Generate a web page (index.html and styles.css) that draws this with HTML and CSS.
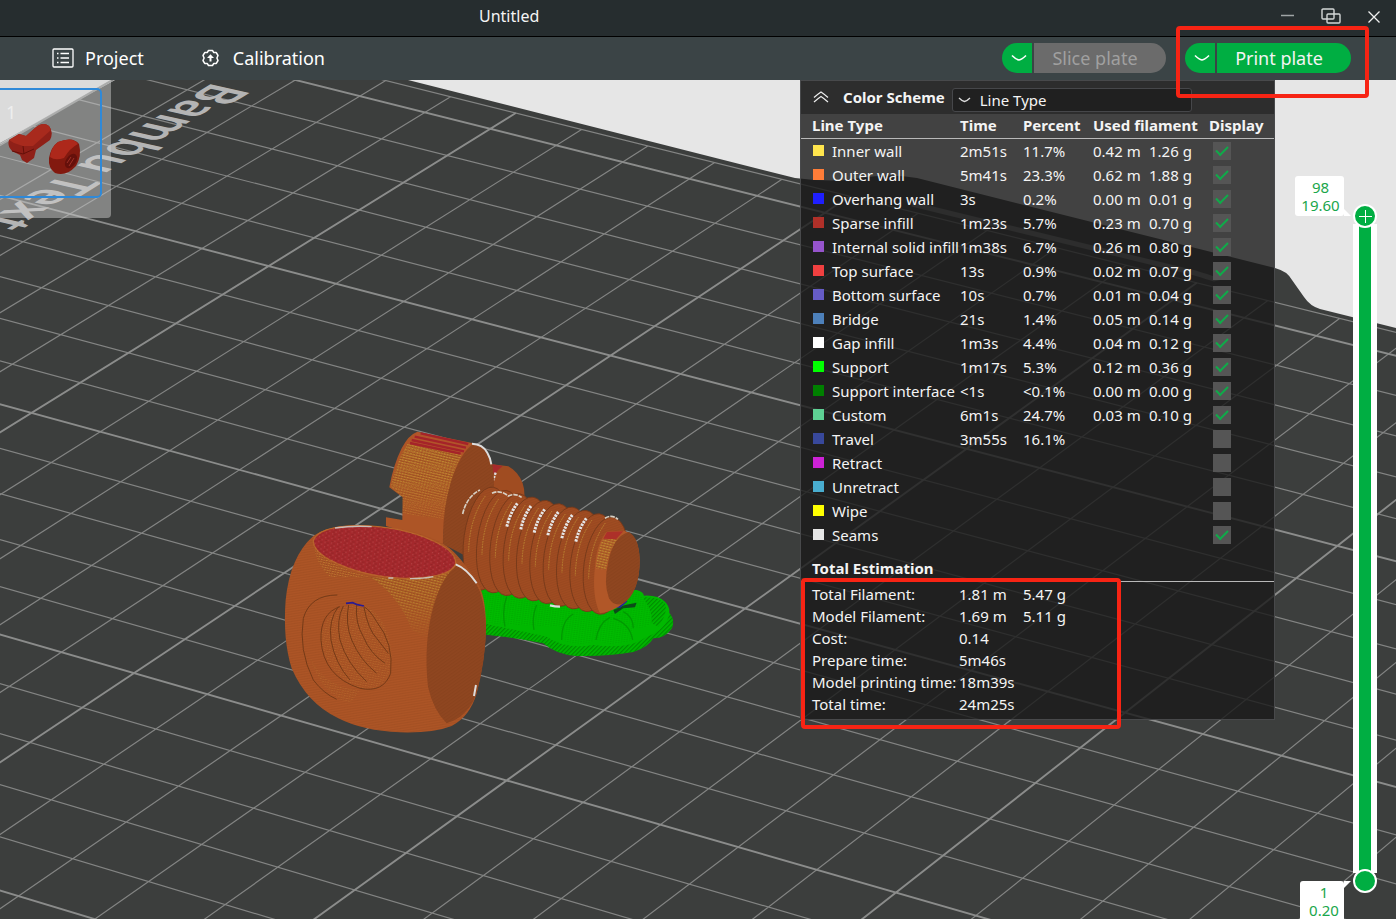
FILE: index.html
```html
<!DOCTYPE html>
<html lang="en">
<head>
<meta charset="utf-8">
<title>Untitled</title>
<link rel="stylesheet" href="styles.css">
</head>
<body>
<header class="titlebar">
  <h1 class="title">Untitled</h1>
  <div class="window-controls">
    <button type="button" aria-label="Minimize"><svg width="20" height="20" viewBox="0 0 20 20"><path d="M3 9.500H16" stroke="#9fa4a5" stroke-width="1.500"/></svg></button>
    <button type="button" aria-label="Restore"><svg width="20" height="20" viewBox="0 0 20 20" fill="none" stroke="#d4d7d7" stroke-width="1.400"><rect x="1" y="3" width="12" height="10" rx="1"/><rect x="6" y="8" width="13" height="9" rx="1"/></svg></button>
    <button type="button" aria-label="Close"><svg width="20" height="20" viewBox="0 0 20 20"><path d="M4.500 5.500L15.500 16.500M15.500 5.500L4.500 16.500" stroke="#f0f0f0" stroke-width="1.300"/></svg></button>
  </div>
</header>
<div class="toolbar">
  <nav class="tabs">
    <a href="#project"><svg width="22" height="20" viewBox="0 0 22 20" fill="none" stroke="#fff" stroke-width="1.300"><rect x="1" y="1" width="20" height="18" rx="1"/><path d="M8.500 5.500H17M8.500 10H17M8.500 14.500H17M5 5.500H6.500M5 10H6.500M5 14.500H6.500"/></svg>Project</a>
    <a href="#calibration"><svg width="17" height="18" viewBox="0 0 17 18" fill="none" stroke="#fff" stroke-width="1.500"><path d="M6.500 1.500H10.500L11.800 3.600H14.300L16 6.500 14.900 9 16 11.500 14.300 14.400H11.800L10.500 16.500H6.500L5.200 14.400H2.700L1 11.500 2.100 9 1 6.500 2.700 3.600H5.200Z" stroke-linejoin="round"/><path d="M8.500 12.500V7.500" stroke-width="2"/><path d="M5 9L8.500 5.200L12 9Z" fill="#fff" stroke="none"/></svg>Calibration</a>
  </nav>
  <div class="actions">
    <div class="split">
      <button class="drop" type="button" aria-label="Slice options"><svg width="16" height="8" viewBox="0 0 16 8"><path d="M1 1.500Q5 5.500 8 6Q11 5.500 15 1.500" fill="none" stroke="#fff" stroke-width="1.600"/></svg></button>
      <button class="main-action" type="button" disabled>Slice plate</button>
    </div>
    <div class="split">
      <button class="drop" type="button" aria-label="Print options"><svg width="16" height="8" viewBox="0 0 16 8"><path d="M1 1.500Q5 5.500 8 6Q11 5.500 15 1.500" fill="none" stroke="#fff" stroke-width="1.600"/></svg></button>
      <button class="main-action" type="button">Print plate</button>
    </div>
    <div class="mark mark-print"></div>
  </div>
</div>
<main class="viewport">
  <svg class="scene" viewBox="0 80 1396 839" preserveAspectRatio="xMinYMin slice" aria-hidden="true">
    <defs>
      <pattern id="layers" width="6" height="5" patternUnits="userSpaceOnUse" patternTransform="rotate(6)"><path d="M0 1H6" stroke="#6d3314" stroke-opacity=".3" stroke-width="1.500"/></pattern>
      <pattern id="dots" width="8" height="7" patternUnits="userSpaceOnUse" patternTransform="rotate(12)"><path d="M0 1.500H5" stroke="#e0b040" stroke-opacity=".6" stroke-width="2"/><path d="M2 5H5" stroke="#6b3212" stroke-opacity=".6" stroke-width="2"/></pattern>
      <pattern id="gold" width="9" height="8" patternUnits="userSpaceOnUse" patternTransform="rotate(14)"><path d="M0 2H7" stroke="#c39a33" stroke-width="3"/><path d="M2 6H8" stroke="#7c4418" stroke-width="1.500"/></pattern>
      <pattern id="redfill" width="19" height="14" patternUnits="userSpaceOnUse" patternTransform="rotate(8)"><path d="M1 2H3M10 9H12" stroke="#cf7a78" stroke-width="1.800"/><path d="M5 3H13M1 10H7" stroke="#82201f" stroke-width="1.500"/></pattern>
      <pattern id="diag" width="8" height="8" patternUnits="userSpaceOnUse" patternTransform="rotate(-35)"><path d="M0 2H8" stroke="#743615" stroke-opacity=".35" stroke-width="2"/></pattern>
      <pattern id="raft" width="9" height="9" patternUnits="userSpaceOnUse" patternTransform="rotate(-45)"><path d="M0 2H9" stroke="#007a00" stroke-width="2.500"/></pattern>
      <pattern id="greenrows" width="8" height="6" patternUnits="userSpaceOnUse" patternTransform="rotate(8)"><path d="M0 2H6" stroke="#008600" stroke-opacity=".6" stroke-width="1.500"/></pattern>
      <linearGradient id="fade" x1="0" y1="0" x2="0" y2="1"><stop offset="0" stop-color="#fff"/><stop offset=".5" stop-color="#bbb"/><stop offset="1" stop-color="#000"/></linearGradient>
      <mask id="fademask" maskContentUnits="objectBoundingBox"><rect width="1" height="1" fill="url(#fade)"/></mask>
      <clipPath id="plateclip"><path d="M104 80H411L800 178L1216 281L1396 328V919H0V145Z"/></clipPath>
    </defs>
    <rect y="80" width="1396" height="839" fill="#e6e6e6"/>
    <path d="M115 80H408L795 178Q835 183 860 178Q890 173 917 178L1275 268Q1287 271 1292 280L1304 297Q1310 306 1320 309L1396 328V919H0V143Z" fill="#3c3e3d"/>
    <path d="M112 80L0 144" stroke="#a9a9a9" stroke-width="1.500"/>
    <g clip-path="url(#plateclip)">
      <path id="grid-minor" fill="none" stroke="#838483" stroke-width="1.200"/>
      <path id="grid-major" fill="none" stroke="#8b8c8b" stroke-width="1.900"/>
    </g>
    <path d="M912 204L1195 273Q1208 277 1214 279L1222 277" fill="none" stroke="#7c7d7c" stroke-width="5"/>
    <text class="plate-name" transform="matrix(-.860 .525 -1.160 -.260 214 82)">Bambu Text</text>

    <g transform="translate(260 410) scale(.3333)">
      <path d="M660 535L1130 540Q1150 545 1152 557Q1195 555 1215 575Q1230 590 1228 608Q1246 630 1236 655Q1215 685 1180 685Q1165 712 1120 726Q1040 740 950 738Q890 735 850 700Q760 682 660 672Z" fill="#00b800"/>
      <path d="M668 640Q740 655 860 680Q920 720 1000 705Q1110 720 1160 680Q1220 660 1228 608Q1246 630 1236 655Q1215 685 1180 685Q1165 712 1120 726Q1040 740 950 738Q890 735 850 700Q760 682 660 672ZM1150 562Q1195 560 1215 580Q1225 610 1195 650L1175 640Z" fill="url(#raft)"/>
      <path d="M665 545L920 585L1000 610L1060 600L1130 545Q1180 590 1175 640Q1150 660 1120 650L1118 690Q1060 715 1010 690Q960 715 905 690Q910 640 890 650L670 640Z" fill="#00bd00"/>
      <path d="M665 545L920 585L1000 610L1060 600L1130 545Q1180 590 1175 640Q1150 660 1120 650L1118 690Q1060 715 1010 690Q960 715 905 690Q910 640 890 650L670 640Z" fill="url(#greenrows)"/>
      <path d="M905 690Q905 630 940 612M1008 690Q1015 640 1050 622M1060 625Q1110 640 1118 690M1090 605Q1120 620 1120 655M740 560Q725 600 735 650M830 585Q815 620 822 660" fill="none" stroke="#009a00" stroke-width="4"/>
      <path d="M1060 600L1095 585L1130 578L1125 592L1090 595L1065 612Z" fill="#0b4b18"/>
      <path d="M1055 590H1080L1100 572" fill="none" stroke="#24229a" stroke-width="6"/>

      <path d="M697 163L745 169Q775 185 788 220Q796 245 792 268L700 250Z" fill="#a04c21"/>
      <path d="M697 163L728 168Q712 180 706 192L698 190Z" fill="#a62a2c"/>
      <path d="M707 188L699 212" stroke="#ddd" stroke-width="7" stroke-dasharray="7 3"/>
      <path d="M472 65L640 100Q600 150 575 230Q550 330 549 402L378 348V322L427 330L428 262L388 232Q400 165 425 115Q445 75 472 65Z" fill="#ad5526"/>
      <path d="M445 98L605 135Q565 210 556 330L428 310V262L392 230Q410 150 445 98Z" fill="url(#gold)" mask="url(#fademask)"/>
      <path d="M445 98L605 135Q565 210 556 330L428 310V262L392 230Q410 150 445 98Z" fill="url(#dots)" opacity=".6"/>
      <path d="M472 67L632 101L606 135L443 101Z" fill="#b2542a"/>
      <path d="M482 70L625 102M464 80L618 113M455 90L612 124M450 99L602 131" stroke="#a52329" stroke-width="7"/>
      <path d="M640 101Q672 104 688 135Q708 190 700 260L640 450L549 402Q547 300 573 215Q600 130 640 101Z" fill="#8f4620"/>
      <path d="M640 101Q672 104 688 135Q708 190 700 260L640 450L549 402Q547 300 573 215Q600 130 640 101Z" fill="url(#diag)"/>
      <path d="M636 101Q668 102 682 128Q692 145 694 163" fill="none" stroke="#ddd" stroke-width="6"/>

      <g id="thread" stroke="#75391a" stroke-width="2.500"></g>
      <path d="M608 312Q620 260 660 240M696 250Q720 238 745 258Q765 248 785 262M1035 325Q1055 312 1074 328" fill="none" stroke="#d7d0c4" stroke-width="5" stroke-dasharray="14 3"/>
      <path d="M772 280Q750 310 740 352M813 288Q791 318 782 360M854 298Q832 328 822 370M895 306Q873 336 863 378M937 315Q915 345 905 387M979 325Q957 355 947 397" fill="none" stroke="#e6e6e6" stroke-width="9" stroke-dasharray="7 3"/>
      <path d="M1040 365L1092 362Q1138 375 1139 450Q1140 540 1090 580Q1060 605 1020 610Q995 560 1005 470Q1010 400 1040 365Z" fill="#b15728"/>
      <path d="M1032 385L1076 388Q1045 420 1038 480L1008 475Q1012 410 1032 385Z" fill="url(#gold)"/>
      <path d="M1041 366L1090 364L1068 388L1030 386Z" fill="#ad3029"/>
      <path d="M1106 366Q1140 382 1139 462Q1136 550 1090 580Q1063 592 1047 565Q1030 520 1045 455Q1060 380 1106 366Z" fill="#8f4620"/>
      <path d="M1106 366Q1140 382 1139 462Q1136 550 1090 580Q1063 592 1047 565Q1030 520 1045 455Q1060 380 1106 366Z" fill="url(#diag)"/>
      <path d="M870 586Q885 590 900 590" stroke="#ddd" stroke-width="7" fill="none"/>

      <path d="M160 378Q210 343 310 346Q480 355 560 408Q600 436 650 516Q677 550 678 650Q677 740 650 850Q630 920 575 948Q520 970 420 967Q310 963 235 925Q140 880 95 775Q68 690 77 570Q90 440 160 378Z" fill="#ad5526"/>
      <path d="M160 378Q210 343 310 346Q480 355 560 408Q600 436 650 516Q677 550 678 650Q677 740 650 850Q630 920 575 948Q520 970 420 967Q310 963 235 925Q140 880 95 775Q68 690 77 570Q90 440 160 378Z" fill="url(#layers)"/>
      <path d="M330 500Q470 520 590 465Q520 530 504 690L455 660Q420 560 330 500Z" fill="url(#gold)" mask="url(#fademask)"/>
      <path d="M160 400Q200 470 330 502Q260 500 210 500Q170 470 160 400Z" fill="url(#dots)"/>
      <path d="M590 467Q640 490 660 545Q678 600 678 660Q675 760 650 850Q625 920 560 940Q520 900 504 830Q490 700 520 590Q545 500 590 467Z" fill="#8f4620"/>
      <path d="M590 467Q640 490 660 545Q678 600 678 660Q675 760 650 850Q625 920 560 940Q520 900 504 830Q490 700 520 590Q545 500 590 467Z" fill="url(#diag)"/>
      <path d="M160 392Q175 350 290 347Q420 347 520 393Q590 425 587 462Q570 505 430 505Q310 500 220 455Q160 425 160 392Z" fill="#a4282c" stroke="#b9652b" stroke-width="4"/>
      <path d="M160 392Q175 350 290 347Q420 347 520 393Q590 425 587 462Q570 505 430 505Q310 500 220 455Q160 425 160 392Z" fill="url(#redfill)"/>
      <path d="M225 354Q280 346 335 350M385 504H400M450 506Q490 506 520 500" stroke="#c9bdb6" stroke-width="4" fill="none"/>
      <path d="M587 463Q620 475 650 520M648 825L642 858" stroke="#ddd" stroke-width="6" fill="none"/>
      <path d="M255 590Q330 560 375 650Q410 740 385 800Q350 850 290 830Q200 790 182 690Q185 620 255 590Z" fill="url(#dots)" opacity=".45"/>
      <path d="M150 740Q190 830 300 840L270 880Q180 850 150 740Z" fill="url(#dots)" opacity=".4"/>
      <path d="M232 555Q150 555 130 625Q115 720 160 810Q190 850 230 868M240 590Q180 610 183 690Q190 800 300 835Q370 850 392 790Q402 700 350 635Q330 600 312 590M235 590Q205 630 213 690Q225 760 270 810M250 588Q228 630 240 690Q260 760 320 815M266 585Q255 640 275 690Q300 750 350 790M290 585Q285 640 310 680Q330 730 375 760M312 592Q325 660 350 685L385 730" fill="none" stroke="#743a17" stroke-width="3"/>
      <path d="M258 580L278 578L292 584L312 588" stroke="#281b93" stroke-width="5" fill="none"/>
    </g>
  </svg>

  <section class="plate-thumb" aria-label="Plate 1">
    <div class="plate-card">
      <span class="plate-number">1</span>
      <svg class="plate-models" width="76" height="60" viewBox="0 4 76 60" aria-hidden="true">
        <path d="M3 22Q1 28 6 33L14 37L16 42L21 45L28 40L30 32L44 22Q48 14 43 8Q37 3 29 10L20 18L13 16Z" fill="#8f2018"/>
        <path d="M3 22L13 16L20 18L29 10Q37 3 43 8L45 12L27 28L17 28L8 25Z" fill="#a82a1d"/>
        <path d="M6 33L17 36L28 31M17 28L18 36" stroke="#641009" fill="none"/>
        <path d="M52 24Q67 18 73 26Q76 38 70 48Q60 59 49 55Q42 50 43 40Q45 29 52 24Z" fill="#82190f"/>
        <path d="M52 24Q67 18 72 26Q64 30 58 40Q49 43 44 39Q45 29 52 24Z" fill="#ad281b"/>
        <ellipse cx="65" cy="43" rx="5" ry="8" transform="rotate(35 65 43)" fill="#65100b"/>
        <path d="M61 45L65 39M63 48L68 40" stroke="#a03027"/>
      </svg>
    </div>
  </section>

  <section class="panel" aria-label="Slicing result">
    <div class="panel-head">
      <button class="collapse" type="button" aria-label="Collapse"><svg width="16" height="12" viewBox="0 0 16 12" fill="none" stroke="#eee" stroke-width="1.200"><path d="M1 6.500Q5 3 8 1Q11 3 15 6.500M1 11Q5 7.500 8 5.500Q11 7.500 15 11"/></svg></button>
      <label for="scheme">Color Scheme</label>
      <div class="select-wrap">
        <svg width="13" height="6" viewBox="0 0 13 6"><path d="M1 1Q4 4 6.500 4.500Q9 4 12 1" fill="none" stroke="#ddd" stroke-width="1.300"/></svg>
        <select id="scheme"><option>Line Type</option><option>Filament</option><option>Speed</option></select>
      </div>
    </div>
    <table class="lines">
      <colgroup><col class="c-name"><col class="c-time"><col class="c-percent"><col class="c-length"><col class="c-weight"><col></colgroup>
      <thead><tr><th>Line Type</th><th>Time</th><th>Percent</th><th colspan="2">Used filament</th><th>Display</th></tr></thead>
      <tbody>
        <tr><td><i class="sw inner"></i>Inner wall</td><td>2m51s</td><td>11.7%</td><td>0.42 m</td><td>1.26 g</td><td><input type="checkbox" aria-label="Inner wall" checked></td></tr>
        <tr><td><i class="sw outer"></i>Outer wall</td><td>5m41s</td><td>23.3%</td><td>0.62 m</td><td>1.88 g</td><td><input type="checkbox" aria-label="Outer wall" checked></td></tr>
        <tr><td><i class="sw overhang"></i>Overhang wall</td><td>3s</td><td>0.2%</td><td>0.00 m</td><td>0.01 g</td><td><input type="checkbox" aria-label="Overhang wall" checked></td></tr>
        <tr><td><i class="sw sparse"></i>Sparse infill</td><td>1m23s</td><td>5.7%</td><td>0.23 m</td><td>0.70 g</td><td><input type="checkbox" aria-label="Sparse infill" checked></td></tr>
        <tr><td><i class="sw solid"></i>Internal solid infill</td><td>1m38s</td><td>6.7%</td><td>0.26 m</td><td>0.80 g</td><td><input type="checkbox" aria-label="Internal solid infill" checked></td></tr>
        <tr><td><i class="sw top"></i>Top surface</td><td>13s</td><td>0.9%</td><td>0.02 m</td><td>0.07 g</td><td><input type="checkbox" aria-label="Top surface" checked></td></tr>
        <tr><td><i class="sw bottom"></i>Bottom surface</td><td>10s</td><td>0.7%</td><td>0.01 m</td><td>0.04 g</td><td><input type="checkbox" aria-label="Bottom surface" checked></td></tr>
        <tr><td><i class="sw bridge"></i>Bridge</td><td>21s</td><td>1.4%</td><td>0.05 m</td><td>0.14 g</td><td><input type="checkbox" aria-label="Bridge" checked></td></tr>
        <tr><td><i class="sw gap"></i>Gap infill</td><td>1m3s</td><td>4.4%</td><td>0.04 m</td><td>0.12 g</td><td><input type="checkbox" aria-label="Gap infill" checked></td></tr>
        <tr><td><i class="sw support"></i>Support</td><td>1m17s</td><td>5.3%</td><td>0.12 m</td><td>0.36 g</td><td><input type="checkbox" aria-label="Support" checked></td></tr>
        <tr><td><i class="sw interface"></i>Support interface</td><td>&lt;1s</td><td>&lt;0.1%</td><td>0.00 m</td><td>0.00 g</td><td><input type="checkbox" aria-label="Support interface" checked></td></tr>
        <tr><td><i class="sw custom"></i>Custom</td><td>6m1s</td><td>24.7%</td><td>0.03 m</td><td>0.10 g</td><td><input type="checkbox" aria-label="Custom" checked></td></tr>
        <tr><td><i class="sw travel"></i>Travel</td><td>3m55s</td><td>16.1%</td><td></td><td></td><td><input type="checkbox" aria-label="Travel"></td></tr>
        <tr><td><i class="sw retract"></i>Retract</td><td></td><td></td><td></td><td></td><td><input type="checkbox" aria-label="Retract"></td></tr>
        <tr><td><i class="sw unretract"></i>Unretract</td><td></td><td></td><td></td><td></td><td><input type="checkbox" aria-label="Unretract"></td></tr>
        <tr><td><i class="sw wipe"></i>Wipe</td><td></td><td></td><td></td><td></td><td><input type="checkbox" aria-label="Wipe"></td></tr>
        <tr><td><i class="sw seams"></i>Seams</td><td></td><td></td><td></td><td></td><td><input type="checkbox" aria-label="Seams" checked></td></tr>
      </tbody>
    </table>
    <h2 class="total-title">Total Estimation</h2>
    <div class="totals-wrap">
      <table class="totals">
        <colgroup><col class="c-label"><col class="c-value"><col></colgroup>
        <tbody>
          <tr><th scope="row">Total Filament:</th><td>1.81 m</td><td>5.47 g</td></tr>
          <tr><th scope="row">Model Filament:</th><td>1.69 m</td><td>5.11 g</td></tr>
          <tr><th scope="row">Cost:</th><td>0.14</td><td></td></tr>
          <tr><th scope="row">Prepare time:</th><td>5m46s</td><td></td></tr>
          <tr><th scope="row">Model printing time:</th><td>18m39s</td><td></td></tr>
          <tr><th scope="row">Total time:</th><td>24m25s</td><td></td></tr>
        </tbody>
      </table>
      <div class="mark mark-totals"></div>
    </div>
  </section>

  <aside class="layers">
    <div class="layer-slider">
      <div class="track"></div>
      <input class="range-low" type="range" min="1" max="98" value="1" aria-label="Lowest layer">
      <input class="range-high" type="range" min="1" max="98" value="98" aria-label="Highest layer">
      <output class="tip tip-high">98<br>19.60</output>
      <output class="tip tip-low">1<br>0.20</output>
    </div>
  </aside>
</main>
<script src="scene.js"></script>
</body>
</html>
```

FILE: styles.css
```css
* { box-sizing: border-box; }

body {
  margin: 0;
  height: 100vh;
  min-height: 800px;
  display: flex;
  flex-direction: column;
  overflow: hidden;
  background: #3c3e3d;
  color: #f4f4f4;
  font-family: "Noto Sans", "Open Sans", sans-serif;
  font-size: 15px;
}

button, select, input { font: inherit; color: inherit; }
button { border: 0; background: none; padding: 0; display: flex; align-items: center; justify-content: center; }

.titlebar {
  display: flex;
  align-items: center;
  justify-content: space-between;
  height: 37px;
  flex: none;
  padding: 0 12px 4px 479px;
  background: #262d2f;
  border-bottom: 1px solid #000;
}
.title { margin: 0; font-size: 16px; font-weight: 400; line-height: 24px; }
.window-controls { display: flex; gap: 23px; }

.toolbar {
  display: flex;
  align-items: center;
  justify-content: space-between;
  height: 43px;
  flex: none;
  padding: 0 45px 2px 52px;
  background: #3b4446;
  font-size: 18px;
}
.tabs { display: flex; gap: 58px; }
.tabs a { display: flex; align-items: center; gap: 11px; color: #fff; text-decoration: none; }
.tabs a + a { gap: 14px; }
.actions { position: relative; display: flex; gap: 19px; }
.split { display: flex; gap: 2px; }
.drop { width: 30px; height: 30px; background: #00ae42; border-radius: 15px 0 0 15px; padding-left: 4px; }
.main-action { width: 134px; height: 30px; background: #00ae42; border-radius: 0 15px 15px 0; padding-right: 10px; }
.main-action:disabled { width: 132px; background: #6b6b6b; color: #a0a0a0; }

.mark { position: absolute; z-index: 2; border: 4px solid #f72414; border-radius: 4px; pointer-events: none; }
.mark-print { right: -18px; top: -17px; width: 193px; height: 72px; }
.mark-totals { left: 0; top: -4px; width: 320px; bottom: -10px; }

.viewport { position: relative; flex: 1; display: flex; min-height: 0; }
.scene { position: absolute; inset: 0; width: 100%; height: 100%; }
.plate-name { font-size: 47px; font-weight: 600; fill: #b4b4b4; }

.plate-thumb {
  position: relative;
  align-self: flex-start;
  width: 111px;
  margin-right: auto;
  padding: 8px 9px 20px 0;
  background: rgba(207, 207, 207, .48);
  border-radius: 0 0 4px 0;
}
.plate-card { display: flex; flex-direction: column; height: 110px; padding: 12px 0 0 6px; border: 2px solid #2f89d8; border-left: 0; border-radius: 0 5px 5px 0; }
.plate-number { font-size: 18px; line-height: 20px; color: #eee; }

.panel {
  position: relative;
  align-self: flex-start;
  width: 475px;
  border: 1px solid #48494b;
  background: rgba(25, 25, 25, .8);
}
.panel-head { display: flex; align-items: center; height: 33px; padding: 0 0 1px 12px; background: rgba(30, 30, 30, .55); font-weight: 700; }
.collapse { width: 16px; height: 16px; margin-right: 14px; }
.select-wrap { position: relative; margin: 6px 0 0 7px; }
.select-wrap svg { position: absolute; z-index: 1; left: 6px; top: 9px; }
.select-wrap select {
  display: block;
  appearance: none;
  width: 240px;
  height: 24px;
  padding: 0 0 0 27px;
  border: 1px solid #46474a;
  border-radius: 3px;
  background: #202020;
  font-weight: 400;
  line-height: 22px;
}

table { width: 100%; table-layout: fixed; border-spacing: 0; }
th, td { padding: 0; text-align: left; white-space: nowrap; line-height: 24px; }
th:first-child, td:first-child { padding-left: 11px; }
.c-name { width: 159px; }
.c-time { width: 63px; }
.c-percent { width: 70px; }
.c-length { width: 56px; }
.c-weight { width: 60px; }
.c-label { width: 158px; }
.c-value { width: 64px; }
.lines th { padding-bottom: 2px; border-bottom: 1px solid #b9b9b9; font-weight: 700; line-height: 22px; }
.lines td { height: 24px; }
.lines td:nth-child(6) { padding-left: 4px; }

.sw { display: inline-block; width: 11px; height: 11px; margin: 0 8px 1px 1px; }
.inner { background: #ffe54d; }
.outer { background: #ff7d38; }
.overhang { background: #1f1fff; }
.sparse { background: #b03029; }
.solid { background: #9654cc; }
.top { background: #f04040; }
.bottom { background: #665cc7; }
.bridge { background: #4d80ba; }
.gap { background: #fff; }
.support { background: #00ff00; }
.interface { background: #008000; }
.custom { background: #5ed194; }
.travel { background: #38489b; }
.retract { background: #cd22d6; }
.unretract { background: #49adcf; }
.wipe { background: #ffff00; }
.seams { background: #e6e6e6; }

.lines input {
  display: grid;
  justify-content: center;
  appearance: none;
  width: 18px;
  height: 18px;
  margin: 0;
  padding-top: 4px;
  background: #555;
}
.lines input:checked::after {
  content: "";
  box-sizing: border-box;
  width: 12px;
  height: 7px;
  border: solid #10aa4a;
  border-width: 0 0 2px 2px;
  transform: rotate(-45deg);
}

.total-title { margin: 0; padding: 9px 0 1px 11px; border-bottom: 1px solid #b9b9b9; font-size: 15px; line-height: 24px; }
.totals-wrap { position: relative; padding: 1px 0 4px; }
.totals th { font-weight: 400; }
.totals th, .totals td { line-height: 22px; }

.layers { position: relative; display: flex; justify-content: flex-end; flex: none; width: 121px; padding: 124px 19px 26px 0; }
.layer-slider { position: relative; width: 24px; }
.track { position: absolute; inset: 20px 0 20px; background: #00ae42; border: solid #fff; border-width: 0 6px; }
.layer-slider input {
  position: absolute;
  inset: 0;
  width: 24px;
  height: 100%;
  margin: 0;
  appearance: none;
  background: none;
  writing-mode: vertical-lr;
  direction: rtl;
  pointer-events: none;
}
.layer-slider input::-webkit-slider-thumb {
  appearance: none;
  width: 24px;
  height: 24px;
  border: 2px solid #fff;
  border-radius: 50%;
  background: #00ae42;
  pointer-events: auto;
}
.layer-slider .range-high::-webkit-slider-thumb {
  background:
    linear-gradient(#fff, #fff) center / 13px 1px no-repeat,
    linear-gradient(#fff, #fff) center / 1px 13px no-repeat,
    #00ae42;
}
.tip {
  position: absolute;
  right: 33px;
  width: 49px;
  padding: 2px 0 2px 2px;
  border-radius: 3px;
  background: #fff;
  color: #1aa64b;
  line-height: 18px;
  text-align: center;
}
.tip::after { content: ""; position: absolute; left: 100%; width: 7px; height: 7px; background: #fff; }
.tip-high { top: -28px; }
.tip-high::after { bottom: 0; clip-path: polygon(0 0, 100% 100%, 0 100%); }
.tip-low { bottom: -28px; width: 44px; padding-left: 4px; }
.tip-low::after { top: 0; clip-path: polygon(0 0, 100% 0, 0 100%); }
```

FILE: scene.js
```js
// Perspective projection of the build plate: one unit is five 10 mm cells.
function project(u, v) {
  const w = 1 - 0.0196 * u - 0.034 * v;
  return [(330 * u - 238.2 * v + 268.7) / w, (82.6 * u + 132.8 * v + 266) / w]
    .map(n => n.toFixed(1)).join(' ');
}

const U0 = -1, U1 = 4.12, V0 = -1.12, V1 = 4;
let minor = '';
let major = '';

for (let i = -5; i <= 20; i++) {
  const line = `M${project(i / 5, V0)}L${project(i / 5, V1)}`;
  if (i % 5 === 0) major += line; else minor += line;
}
for (let j = -5; j <= 20; j++) {
  const line = `M${project(U0, j / 5)}L${project(U1, j / 5)}`;
  if (j % 5 === 0) major += line; else minor += line;
}
minor += `M${project(U0, V0)}L${project(U1, V0)}`;

document.getElementById('grid-minor').setAttribute('d', minor);
document.getElementById('grid-major').setAttribute('d', major);

// Bolt thread: overlapping rings from the head to the tip.
const rings = 10;
let thread = '';
for (let k = 0; k < rings; k++) {
  const cx = 678 + k * 40;
  const cy = 386 + k * 9;
  const ry = 156 - k;
  const shape = `cx="${cx}" cy="${cy}" rx="66" ry="${ry}" transform="rotate(8 ${cx} ${cy})"`;
  thread += `<ellipse ${shape} fill="#a04c22"/><ellipse ${shape} fill="url(#layers)" stroke="none"/>`;
  thread += `<path d="M${cx - 2} ${cy - 128}Q${cx - 50} ${cy - 60} ${cx - 52} ${cy + 40}" fill="none" stroke="#b98231" stroke-width="3" stroke-dasharray="5 3"/>`;
}
document.getElementById('thread').innerHTML = thread;
```
